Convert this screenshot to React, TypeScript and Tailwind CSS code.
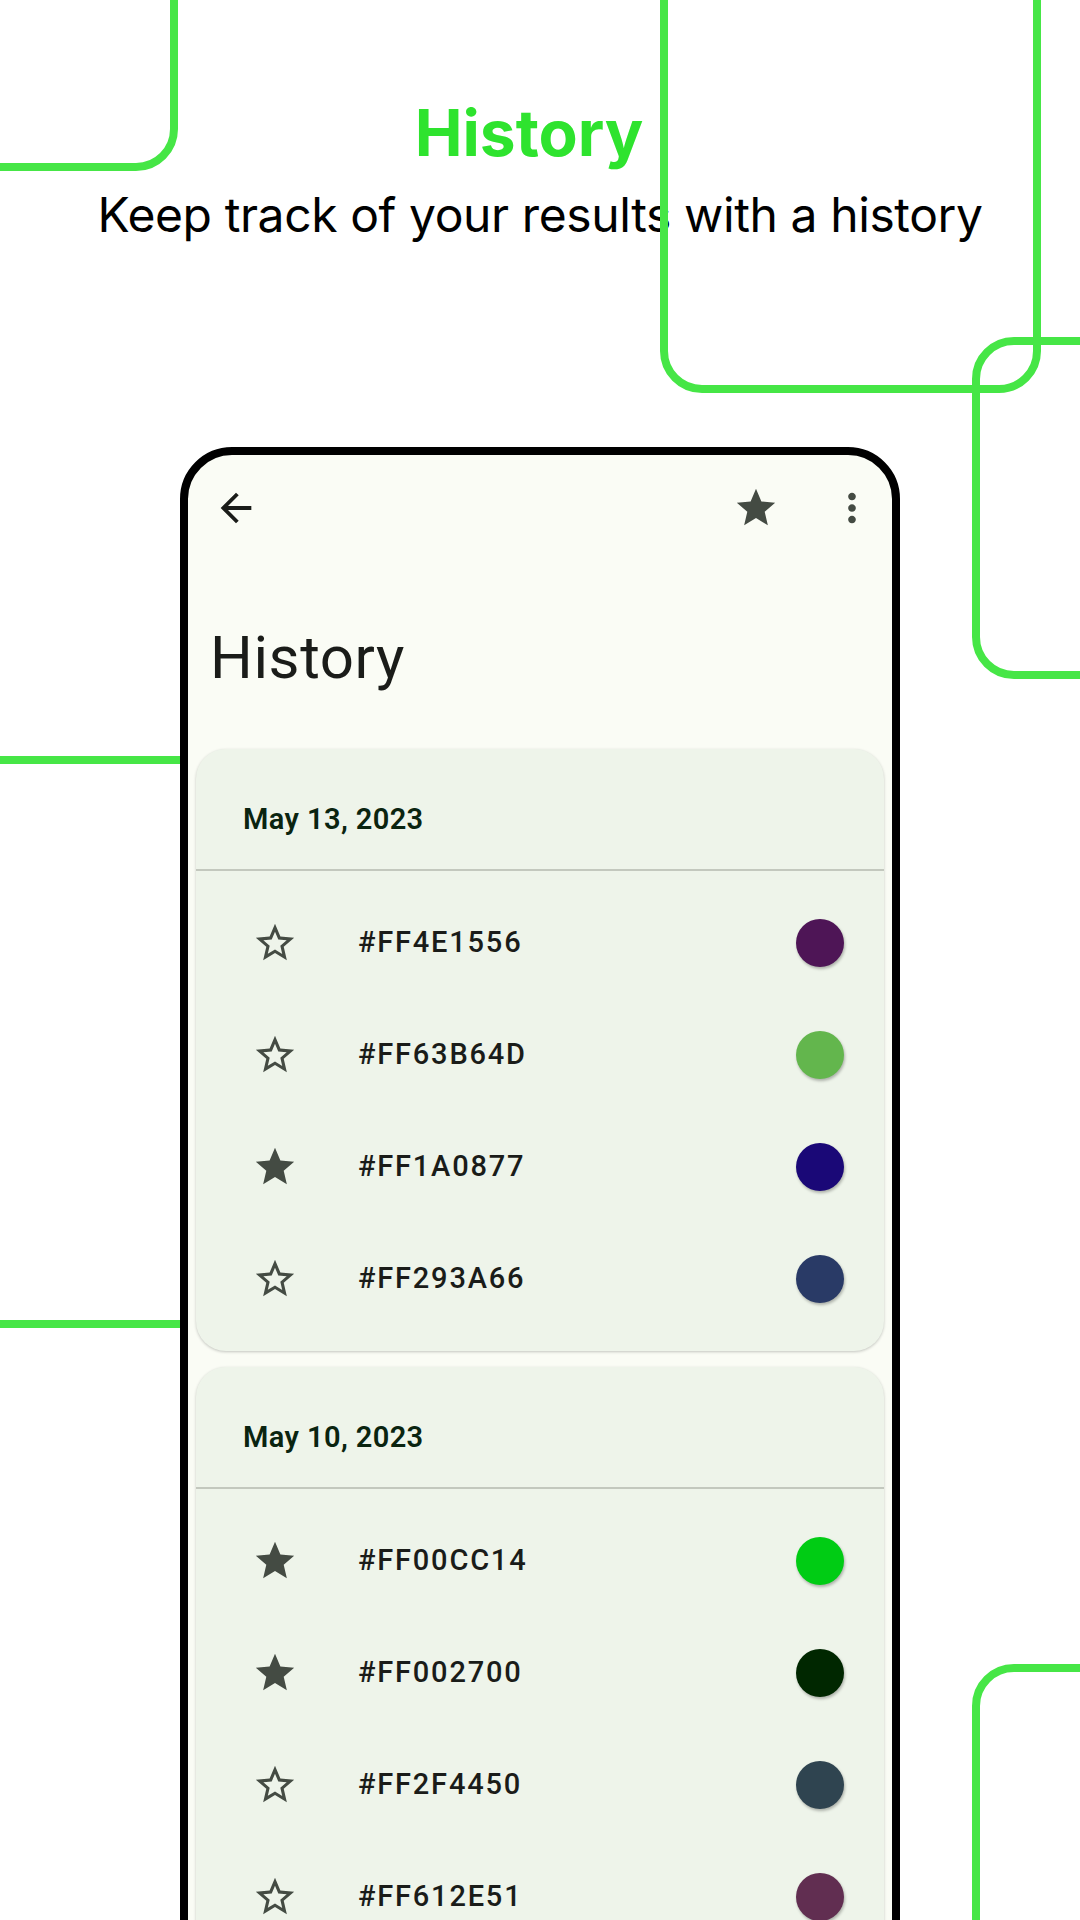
import * as React from 'react'

const history = [
  {
    date: 'May 13, 2023',
    items: [
      { hex: '#FF4E1556', color: '#4E1556', starred: false },
      { hex: '#FF63B64D', color: '#63B64D', starred: false },
      { hex: '#FF1A0877', color: '#1A0877', starred: true },
      { hex: '#FF293A66', color: '#293A66', starred: false },
    ],
  },
  {
    date: 'May 10, 2023',
    items: [
      { hex: '#FF00CC14', color: '#00CC14', starred: true },
      { hex: '#FF002700', color: '#002700', starred: true },
      { hex: '#FF2F4450', color: '#2F4450', starred: false },
      { hex: '#FF612E51', color: '#612E51', starred: false },
    ],
  },
]

function StarIcon({ filled, className }: { filled: boolean; className?: string }) {
  return (
    <svg viewBox="0 0 24 24" className={className} fill="currentColor">
      {filled ? (
        <path d="M12 17.27L18.18 21l-1.64-7.03L22 9.24l-7.19-.61L12 2 9.19 8.63 2 9.24l5.46 4.73L5.82 21z" />
      ) : (
        <path d="M22 9.24l-7.19-.62L12 2 9.19 8.63 2 9.24l5.46 4.73L5.82 21 12 17.27 18.18 21l-1.63-7.03L22 9.24zM12 15.4l-3.76 2.27 1-4.28-3.32-2.88 4.38-.38L12 6.1l1.71 4.04 4.38.38-3.32 2.88 1 4.28L12 15.4z" />
      )}
    </svg>
  )
}

function BackIcon({ className }: { className?: string }) {
  return (
    <svg viewBox="0 0 24 24" className={className} fill="currentColor">
      <path d="M20 11H7.83l5.59-5.59L12 4l-8 8 8 8 1.41-1.41L7.83 13H20v-2z" />
    </svg>
  )
}

function MoreIcon({ className }: { className?: string }) {
  return (
    <svg viewBox="0 0 24 24" className={className} fill="currentColor">
      <path d="M12 8c1.1 0 2-.9 2-2s-.9-2-2-2-2 .9-2 2 .9 2 2 2zm0 2c-1.1 0-2 .9-2 2s.9 2 2 2 2-.9 2-2-.9-2-2-2zm0 6c-1.1 0-2 .9-2 2s.9 2 2 2 2-.9 2-2-.9-2-2-2z" />
    </svg>
  )
}

function HistoryCard({ date, items }: (typeof history)[number]) {
  return (
    <div className="rounded-[30px] bg-[#EEF4EA] shadow-[0_1px_3px_rgba(0,0,0,0.22)]">
      <div className="h-[120px] pt-[52px] pl-[47px]">
        <span className="block text-[29px] leading-[36px] font-semibold tracking-[0.4px] text-[#0A2410]">
          {date}
        </span>
      </div>
      <div className="h-[2px] bg-[#C3C8BE]" />
      <div className="py-4">
        {items.map((item) => (
          <div key={item.hex} className="flex h-[112px] items-center pl-[56px] pr-[40px]">
            <StarIcon filled={item.starred} className="h-[46px] w-[46px] text-[#444B43]" />
            <span className="ml-[60px] flex-1 text-[29px] font-medium tracking-[1.8px] text-[#1A1C19]">
              {item.hex}
            </span>
            <div
              className="h-12 w-12 rounded-full shadow-[1px_2px_3px_rgba(0,0,0,0.28)]"
              style={{ backgroundColor: item.color }}
            />
          </div>
        ))}
      </div>
    </div>
  )
}

export default function App() {
  return (
    <div className="relative h-[1920px] w-[1080px] overflow-hidden bg-white">
      {/* outline behind the phone */}
      <div className="absolute left-[-200px] top-[756px] h-[572px] w-[500px] rounded-[42px] border-[8px] border-[#46E646]" />

      <div className="relative z-10 flex flex-col items-center pt-[101px]">
        <h1 className="mr-[22px] text-[64px] leading-none font-bold text-[#2EE32E] [font-family:Inter,sans-serif]">
          History
        </h1>
        <p className="mt-[26px] text-[48px] leading-none tracking-[-0.4px] text-black [font-family:Inter,sans-serif]">
          Keep track of your results with a history
        </p>

        <div className="mt-[208px] h-[1600px] w-[720px] overflow-hidden rounded-[52px] border-[8px] border-black bg-[#FAFCF5] [font-family:Roboto,sans-serif]">
          <div className="flex h-[106px] items-center pl-[25px] pr-[17px] text-[#444B43]">
            <BackIcon className="h-[46px] w-[46px] text-[#1A1C19]" />
            <div className="flex-1" />
            <StarIcon filled className="h-[46px] w-[46px]" />
            <MoreIcon className="ml-[50px] h-[46px] w-[46px]" />
          </div>
          <h2 className="mt-[67px] pl-[22px] text-[60px] leading-none tracking-[0.6px] text-[#1A1C19]">History</h2>
          <div className="mt-[61px] flex flex-col gap-4 pl-[8px] pr-[8px]">
            {history.map((group) => (
              <HistoryCard key={group.date} {...group} />
            ))}
          </div>
        </div>
      </div>

      {/* decorative outlines */}
      <div className="absolute left-[-200px] top-[-200px] z-20 h-[371px] w-[378px] rounded-[42px] border-[8px] border-[#46E646]" />
      <div className="absolute left-[660px] top-[-100px] z-20 h-[493px] w-[381px] rounded-[42px] border-[8px] border-[#46E646]" />
      <div className="absolute left-[972px] top-[337px] z-20 h-[342px] w-[300px] rounded-[42px] border-[8px] border-[#46E646]" />
      <div className="absolute left-[972px] top-[1664px] z-20 h-[400px] w-[300px] rounded-[42px] border-[8px] border-[#46E646]" />
    </div>
  )
}
